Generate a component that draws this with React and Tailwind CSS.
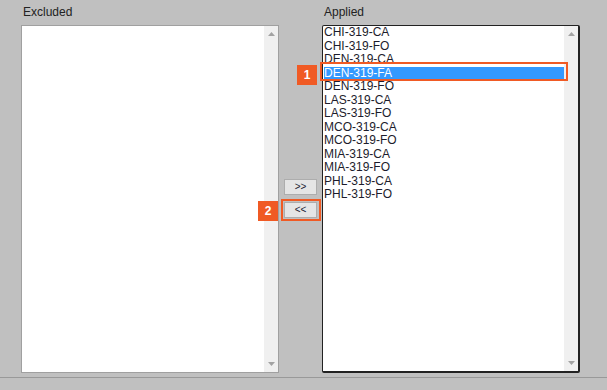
import React from 'react'

const applied = [
    'CHI-319-CA', 'CHI-319-FO', 'DEN-319-CA', 'DEN-319-FA', 'DEN-319-FO',
    'LAS-319-CA', 'LAS-319-FO', 'MCO-319-CA', 'MCO-319-FO', 'MIA-319-CA',
    'MIA-319-FO', 'PHL-319-CA', 'PHL-319-FO',
]

const Arrow = ({ down }) => (
    <svg width="7" height="4" viewBox="0 0 7 4" className="block">
        {down ? <polygon points="0,0 7,0 3.5,4" fill="#a3a3a3" /> : <polygon points="0,4 7,4 3.5,0" fill="#a3a3a3" />}
    </svg>
)

const Scrollbar = () => (
    <div className="w-[14px] h-full bg-[#f0f0f0] flex flex-col items-center justify-between py-[6px]">
        <Arrow />
        <Arrow down />
    </div>
)

const Badge = ({ n, className }) => (
    <div className={`absolute w-[20px] h-[20px] bg-[#f05a24] text-white text-[12px] font-bold flex items-center justify-center ${className}`}>
        {n}
    </div>
)

const App = () => {
    return (
        <div className="relative w-[607px] h-[390px] bg-[#c0c0c0] overflow-hidden" style={{ fontFamily: '"Liberation Sans", Arial, sans-serif' }}>
            <div className="flex pl-[21px] pt-[5px] h-[377px]">
                <div className="w-[258px] flex flex-col">
                    <p className="h-[20px] pl-[2px] text-[12px] leading-[14px] text-[#222]">Excluded</p>
                    <div className="h-[348px] bg-white border border-[#a0a0a0] flex justify-end">
                        <Scrollbar />
                    </div>
                </div>

                <div className="w-[43px] flex flex-col items-center pt-[174px] gap-[7px]">
                    <button className="w-[33px] h-[16px] bg-[#e5e5e5] border border-[#adadad] text-[10px] leading-none text-[#223]">&gt;&gt;</button>
                    <button className="w-[33px] h-[16px] bg-[#e5e5e5] border border-[#adadad] text-[10px] leading-none text-[#223]">&lt;&lt;</button>
                </div>

                <div className="w-[258px] flex flex-col">
                    <p className="h-[20px] pl-[2px] text-[12px] leading-[14px] text-[#222]">Applied</p>
                    <div className="h-[348px] bg-white border border-[#222] border-r-2 border-b-2 rounded-[2px] flex">
                        <ul className="flex-1 pl-[1px] text-[12px] leading-[13.5px] text-[#1c1c2c]">
                            {applied.map((item) => (
                                <li key={item} className={item === 'DEN-319-FA' ? 'bg-[#3399ff] text-white' : ''}>{item}</li>
                            ))}
                        </ul>
                        <Scrollbar />
                    </div>
                </div>
            </div>
            <div className="border-t border-[#999]" />

            <div className="absolute left-[320px] top-[62px] w-[248px] h-[19px] border-2 border-[#f05a24]" />
            <Badge n="1" className="left-[297px] top-[65px]" />

            <div className="absolute left-[281px] top-[199px] w-[40px] h-[22px] border-2 border-[#f05a24]" />
            <Badge n="2" className="left-[258px] top-[201px]" />
        </div>
    )
}

export default App
